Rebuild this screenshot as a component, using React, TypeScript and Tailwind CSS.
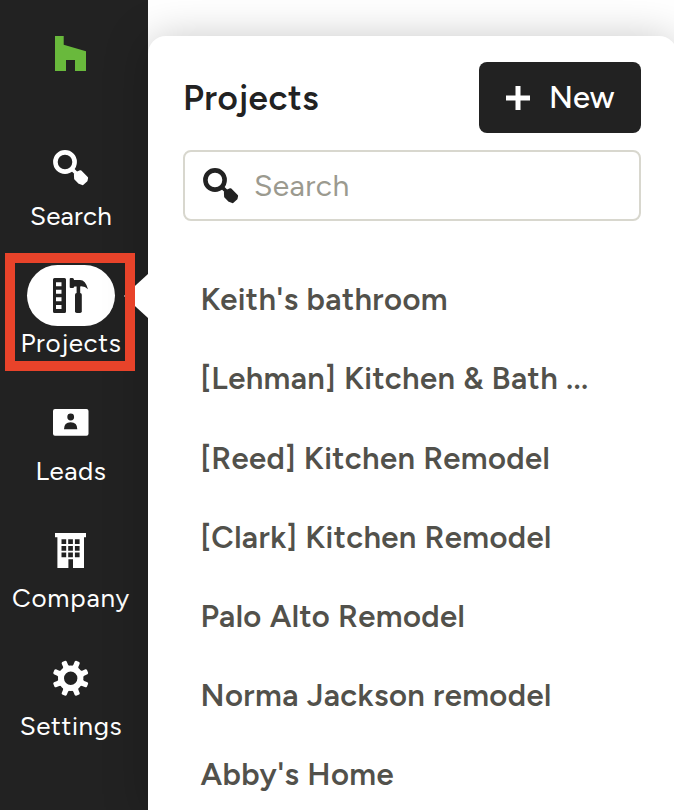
import classNames from "clsx";
import type { ReactNode } from "react";

type NavItem = {
  label: string;
  icon: ReactNode;
  tracking: string;
  isActive?: boolean;
};

function SearchIcon() {
  return (
    <svg width="36" height="36" viewBox="0 0 36 36" fill="none">
      <circle cx="12" cy="12" r="9.6" stroke="currentColor" strokeWidth="4.6" />
      <path d="M18.5 18.5l5 5" stroke="currentColor" strokeWidth="3.8" />
      <path
        d="M22.2 24.8L24.6 22.6L27.4 21.5L33.8 27.9L33.2 30.6L29.6 33.9L26.3 32.6L22.4 28.5Z"
        fill="currentColor"
        stroke="currentColor"
        strokeWidth="2.6"
        strokeLinejoin="round"
      />
    </svg>
  );
}

function ProjectsIcon() {
  return (
    <svg width="36" height="36" viewBox="0 0 36 36" fill="currentColor">
      <path
        fillRule="evenodd"
        d="M1.5 0h10q1.5 0 1.5 1.5v32q0 1.5-1.5 1.5h-10q-1.5 0-1.5-1.5v-32q0-1.500 1.500-1.500zM3 4.200v4h5.500v-4zM3 11.700v4h5.500v-4zM3 19.300v4h5.500v-4zM3 26.900v4h5.500v-4z"
      />
      <path d="M17.700 0h1.800q1.300 0 1.600 2H27q5.500 0 8 9.200Q32 8 27.200 8.400V16h-3.600V8.400H21.400Q21 10 19.500 10h-1.800Q16.700 10 16.700 9V1Q16.700 0 17.700 0z" />
      <rect x="22" y="15" width="6.8" height="20" rx="1.8" />
    </svg>
  );
}

function LeadsIcon() {
  return (
    <svg width="36" height="36" viewBox="0 0 36 36" fill="currentColor">
      <path
        fillRule="evenodd"
        d="M2 4h31.500q2 0 2 2v22.700q0 2-2 2h-31.500q-2 0-2-2v-22.700q0-2 2-2zM17.700 8.600a3.400 3.400 0 1 0 0 6.800 3.400 3.400 0 1 0 0-6.800zM11 24.300h13.300q0-7-6.650-7t-6.650 7z"
      />
    </svg>
  );
}

function CompanyIcon() {
  return (
    <svg width="36" height="36" viewBox="0 0 36 36" fill="currentColor">
      <path
        fillRule="evenodd"
        d="M2 0h31v4.200h-2v30.800h-11v-8.700h-4.600v8.700h-11v-30.800h-2.400zM8.500 6.300v4.700h4.700v-4.700zM15.200 6.300v4.700h4.700v-4.700zM21.900 6.300v4.700h4.700v-4.700zM8.500 13v4.700h4.700v-4.700zM15.200 13v4.700h4.700v-4.700zM21.900 13v4.700h4.700v-4.700zM8.500 19.600v4.700h4.700v-4.700zM15.200 19.600v4.700h4.700v-4.700zM21.900 19.600v4.700h4.700v-4.700z"
      />
    </svg>
  );
}

const teeth = [22.5, 67.5, 112.5, 157.5, 202.5, 247.5, 292.5, 337.5];

function SettingsIcon() {
  return (
    <svg width="36" height="36" viewBox="0 0 36 36" fill="none">
      <circle cx="17.7" cy="18.3" r="9.7" stroke="currentColor" strokeWidth="6" />
      {teeth.map((angle) => (
        <path
          key={angle}
          d="M13 7.500Q14.900 6.500 15 4.500V1Q15.200 0 16.100 -0.200H19.300Q20.200 0 20.400 1V4.500Q20.500 6.500 22.400 7.500Z"
          fill="currentColor"
          transform={`translate(0 0.3) rotate(${angle} 17.7 18)`}
        />
      ))}
    </svg>
  );
}

const navItems: NavItem[] = [
  { label: "Search", icon: <SearchIcon />, tracking: "tracking-[0.2px]" },
  {
    label: "Projects",
    icon: <ProjectsIcon />,
    tracking: "tracking-[0.6px]",
    isActive: true,
  },
  { label: "Leads", icon: <LeadsIcon />, tracking: "tracking-[0.5px]" },
  { label: "Company", icon: <CompanyIcon />, tracking: "tracking-[0.8px]" },
  { label: "Settings", icon: <SettingsIcon />, tracking: "tracking-[0.6px]" },
];

const projects = [
  "Keith's bathroom",
  "[Lehman] Kitchen & Bath ...",
  "[Reed] Kitchen Remodel",
  "[Clark] Kitchen Remodel",
  "Palo Alto Remodel",
  "Norma Jackson remodel",
  "Abby's Home",
];

function Sidebar() {
  return (
    <nav className="flex w-[148px] shrink-0 flex-col bg-[#222222] pt-9 text-white">
      <svg
        className="ml-[55px] shrink-0 text-[#69b93c]"
        width="32"
        height="35"
        viewBox="0 0 32 35"
        fill="currentColor"
      >
        <path d="M0 0h8.700v8.700L31 15.300V35H20V24h-9v11H0z" />
      </svg>
      <ul className="mt-[66.5px] flex flex-col gap-[32.5px]">
        {navItems.map(({ label, icon, tracking, isActive }) => (
          <li key={label} className="relative flex w-[142px] flex-col items-center">
            <div
              className={classNames(
                "flex h-[61px] w-[88px] items-center justify-center rounded-full",
                { "bg-white text-[#222222]": isActive },
              )}
            >
              {icon}
            </div>
            <span
              className={classNames(
                "text-[26px] leading-[34px] whitespace-nowrap",
                tracking,
              )}
            >
              {label}
            </span>
            {isActive && (
              <div className="absolute -top-3 left-[5px] z-20 h-[118px] w-[130px] border-10 border-[#e8432a]" />
            )}
          </li>
        ))}
      </ul>
    </nav>
  );
}

export default function App() {
  return (
    <div className="flex h-[810px] w-[674px] overflow-hidden bg-white font-['Figtree','Inter',sans-serif]">
      <Sidebar />
      <div className="flex w-[526px] shrink-0 pt-9">
        <main className="relative mr-[-3px] flex-1 shrink-0 rounded-t-[18px] bg-white pr-9 pl-[35px] shadow-[0_4px_44px_rgba(0,0,0,0.25)]">
          {/* pointer towards the active nav item */}
          <svg
            className="absolute top-[237px] -left-6 text-white"
            width="25"
            height="46"
            viewBox="0 0 25 46"
            fill="currentColor"
          >
            <path d="M0 23L24 1h1v44h-1z" />
          </svg>
          <div className="flex items-center justify-between pt-[26px]">
            <h1 className="pt-px text-[35px] leading-none font-semibold tracking-[0.5px] text-[#222222]">
              Projects
            </h1>
            <button className="flex h-[71px] w-[162px] items-center rounded-lg bg-[#222222] pl-[27px] text-white">
              <svg width="24" height="24" viewBox="0 0 24 24" fill="none">
                <path
                  d="M12 0v24M0 12h24"
                  stroke="currentColor"
                  strokeWidth="5"
                />
              </svg>
              <span className="ml-[19px] pt-0.5 text-[31px] font-medium tracking-[0.1px]">
                New
              </span>
            </button>
          </div>
          <label className="mt-[17px] flex h-[71px] items-center gap-[15px] rounded-lg border-2 border-[#d8d7ce] pl-[18px] text-[#222222]">
            <SearchIcon />
            <input
              className="w-60 text-[30px] tracking-[0.4px] outline-none placeholder:text-[#9b9a8f]"
              placeholder="Search"
            />
          </label>
          <ul className="mt-10 pl-[17.5px] text-[31px] font-semibold tracking-[0.4px] text-[#52514b]">
            {projects.map((name) => (
              <li
                key={name}
                className="flex h-[79.15px] items-center whitespace-pre"
              >
                {name}
              </li>
            ))}
          </ul>
        </main>
      </div>
    </div>
  );
}
